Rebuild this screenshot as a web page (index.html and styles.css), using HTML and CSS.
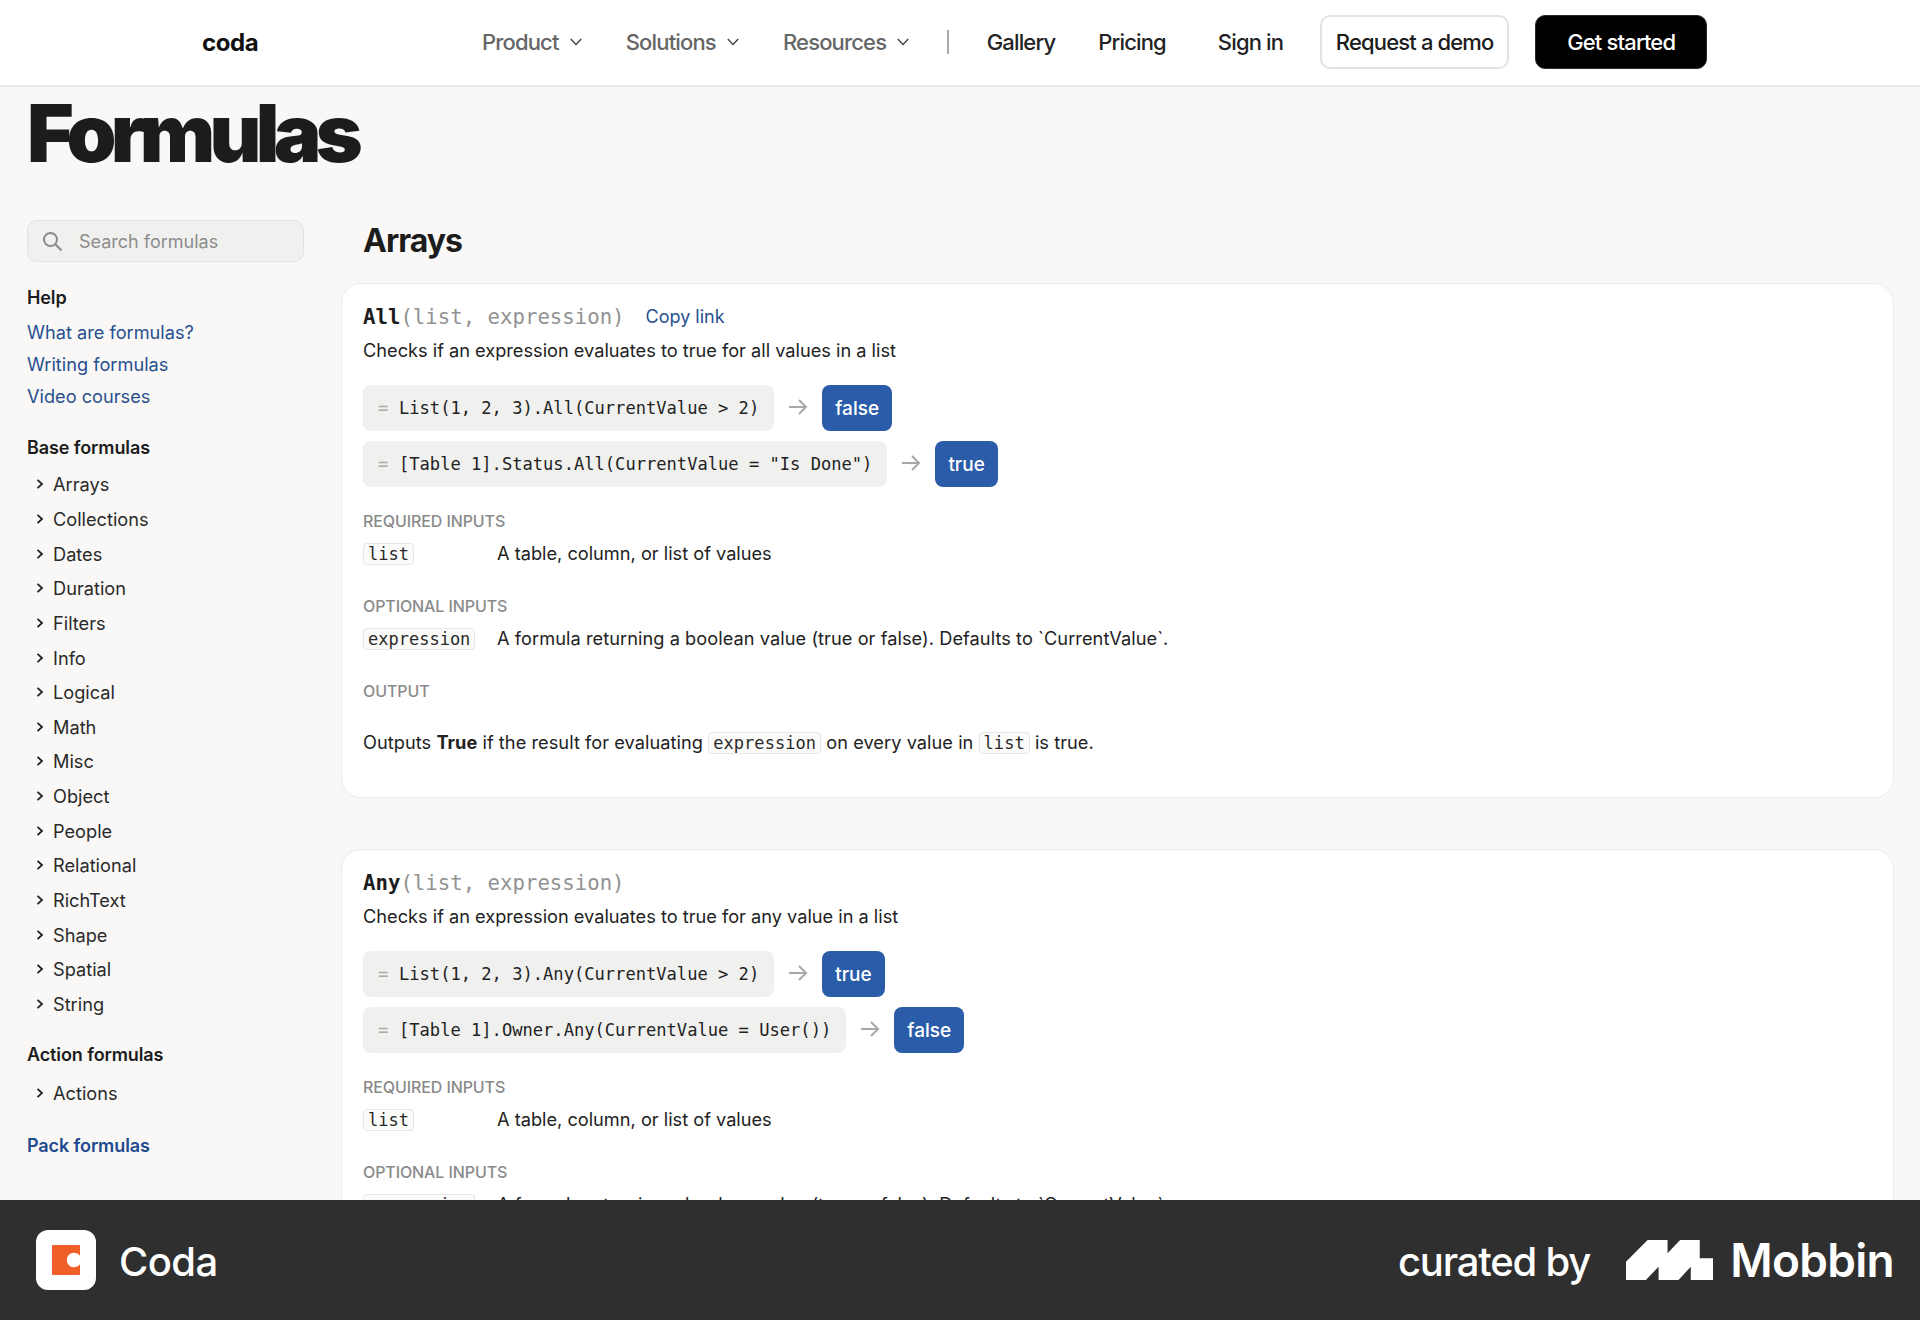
FILE: index.html
```html
<!DOCTYPE html>
<html lang="en">
<head>
<meta charset="utf-8">
<title>Formulas - Coda</title>
<link rel="stylesheet" href="styles.css">
</head>
<body>
<div class="page">
  <header class="topbar">
    <div class="logo">coda</div>
    <nav class="nav">
      <a class="nav-item muted">Product<svg class="chev" viewBox="0 0 14 14"><path d="M1.800 4l5.200 5.500L12.200 4"/></svg></a>
      <a class="nav-item muted">Solutions<svg class="chev" viewBox="0 0 14 14"><path d="M1.800 4l5.200 5.500L12.200 4"/></svg></a>
      <a class="nav-item muted last-menu">Resources<svg class="chev" viewBox="0 0 14 14"><path d="M1.800 4l5.200 5.500L12.200 4"/></svg></a>
      <span class="nav-divider"></span>
      <a class="nav-item gallery">Gallery</a>
      <a class="nav-item pricing">Pricing</a>
      <a class="nav-item signin">Sign in</a>
      <a class="btn btn-outline">Request a demo</a>
      <a class="btn btn-solid">Get started</a>
    </nav>
  </header>
  <main class="content">
    <h1 class="page-title">Formulas</h1>
    <div class="columns">
      <aside class="sidebar">
        <div class="search">
          <svg class="search-icon" viewBox="0 0 20 20"><circle cx="8.500" cy="8.500" r="6.500"/><path d="M13.300 13.300L19.500 19.500"/></svg>
          <span>Search formulas</span>
        </div>
        <h4 class="side-head help">Help</h4>
        <ul class="side-links">
          <li>What are formulas?</li>
          <li>Writing formulas</li>
          <li>Video courses</li>
        </ul>
        <h4 class="side-head base">Base formulas</h4>
        <ul class="side-tree">
          <li><svg viewBox="0 0 10 10"><path d="M1.500.8L6 5 1.500 9.200"/></svg>Arrays</li>
          <li><svg viewBox="0 0 10 10"><path d="M1.500.8L6 5 1.500 9.200"/></svg>Collections</li>
          <li><svg viewBox="0 0 10 10"><path d="M1.500.8L6 5 1.500 9.200"/></svg>Dates</li>
          <li><svg viewBox="0 0 10 10"><path d="M1.500.8L6 5 1.500 9.200"/></svg>Duration</li>
          <li><svg viewBox="0 0 10 10"><path d="M1.500.8L6 5 1.500 9.200"/></svg>Filters</li>
          <li><svg viewBox="0 0 10 10"><path d="M1.500.8L6 5 1.500 9.200"/></svg>Info</li>
          <li><svg viewBox="0 0 10 10"><path d="M1.500.8L6 5 1.500 9.200"/></svg>Logical</li>
          <li><svg viewBox="0 0 10 10"><path d="M1.500.8L6 5 1.500 9.200"/></svg>Math</li>
          <li><svg viewBox="0 0 10 10"><path d="M1.500.8L6 5 1.500 9.200"/></svg>Misc</li>
          <li><svg viewBox="0 0 10 10"><path d="M1.500.8L6 5 1.500 9.200"/></svg>Object</li>
          <li><svg viewBox="0 0 10 10"><path d="M1.500.8L6 5 1.500 9.200"/></svg>People</li>
          <li><svg viewBox="0 0 10 10"><path d="M1.500.8L6 5 1.500 9.200"/></svg>Relational</li>
          <li><svg viewBox="0 0 10 10"><path d="M1.500.8L6 5 1.500 9.200"/></svg>RichText</li>
          <li><svg viewBox="0 0 10 10"><path d="M1.500.8L6 5 1.500 9.200"/></svg>Shape</li>
          <li><svg viewBox="0 0 10 10"><path d="M1.500.8L6 5 1.500 9.200"/></svg>Spatial</li>
          <li><svg viewBox="0 0 10 10"><path d="M1.500.8L6 5 1.500 9.200"/></svg>String</li>
        </ul>
        <h4 class="side-head action">Action formulas</h4>
        <ul class="side-tree">
          <li><svg viewBox="0 0 10 10"><path d="M1.500.8L6 5 1.500 9.200"/></svg>Actions</li>
        </ul>
        <h4 class="side-head pack">Pack formulas</h4>
      </aside>
      <section class="main-col">
        <h2 class="section-title">Arrays</h2>
        <article class="card">
          <div class="sig"><code class="sig-code"><b>All</b>(list, expression)</code><a class="copy">Copy link</a></div>
          <p class="desc">Checks if an expression evaluates to true for all values in a list</p>
          <div class="example">
            <code class="formula"><i>=</i>List(1, 2, 3).All(CurrentValue &gt; 2)</code>
            <svg class="arrow" viewBox="0 0 20 20"><path d="M1 10h17M11 3l7 7-7 7"/></svg>
            <span class="result">false</span>
          </div>
          <div class="example">
            <code class="formula"><i>=</i>[Table 1].Status.All(CurrentValue = "Is Done")</code>
            <svg class="arrow" viewBox="0 0 20 20"><path d="M1 10h17M11 3l7 7-7 7"/></svg>
            <span class="result">true</span>
          </div>
          <h5 class="label first">REQUIRED INPUTS</h5>
          <div class="param"><div class="param-name"><code class="chip">list</code></div><span>A table, column, or list of values</span></div>
          <h5 class="label">OPTIONAL INPUTS</h5>
          <div class="param"><div class="param-name"><code class="chip">expression</code></div><span class="long">A formula returning a boolean value (true or false). Defaults to `CurrentValue`.</span></div>
          <h5 class="label">OUTPUT</h5>
          <p class="output">Outputs <b>True</b> if the result for evaluating <code class="chip">expression</code> on every value in <code class="chip">list</code> is true.</p>
        </article>
        <article class="card">
          <div class="sig"><code class="sig-code"><b>Any</b>(list, expression)</code></div>
          <p class="desc">Checks if an expression evaluates to true for any value in a list</p>
          <div class="example">
            <code class="formula"><i>=</i>List(1, 2, 3).Any(CurrentValue &gt; 2)</code>
            <svg class="arrow" viewBox="0 0 20 20"><path d="M1 10h17M11 3l7 7-7 7"/></svg>
            <span class="result">true</span>
          </div>
          <div class="example">
            <code class="formula"><i>=</i>[Table 1].Owner.Any(CurrentValue = User())</code>
            <svg class="arrow" viewBox="0 0 20 20"><path d="M1 10h17M11 3l7 7-7 7"/></svg>
            <span class="result">false</span>
          </div>
          <h5 class="label first">REQUIRED INPUTS</h5>
          <div class="param"><div class="param-name"><code class="chip">list</code></div><span>A table, column, or list of values</span></div>
          <h5 class="label">OPTIONAL INPUTS</h5>
          <div class="param"><div class="param-name"><code class="chip">expression</code></div><span class="long">A formula returning a boolean value (true or false). Defaults to `CurrentValue`.</span></div>
        </article>
      </section>
    </div>
  </main>
  <footer class="footer">
    <div class="foot-left">
      <div class="app-icon"><svg viewBox="0 0 28 30"><path class="coda-mark" d="M1 0h26a1 1 0 0 1 1 1v9.800A7.300 7.300 0 1 0 28 19.200V29a1 1 0 0 1-1 1H1a1 1 0 0 1-1-1V1a1 1 0 0 1 1-1z"/></svg></div>
      <span class="app-name">Coda</span>
    </div>
    <div class="foot-right">
      <span class="curated">curated by</span>
      <svg class="mobbin-mark" viewBox="0 0 87.300 40"><path d="M0 21.700L21.700 0h20v13.300L54.300 0H74v18.300h13.300V40H65V26.700L52.700 40h-20V26.700L20 40H0z"/></svg>
      <span class="mobbin">Mobbin</span>
    </div>
  </footer>
</div>
</body>
</html>
```
FILE: styles.css
```css
* { box-sizing: border-box; }
html, body { margin: 0; padding: 0; }
body { font-family: Inter, "Liberation Sans", sans-serif; color: #1c1c1c; background: #f9f8f6; }
h1, h2, h4, h5, p, ul { margin: 0; padding: 0; }
ul { list-style: none; }
code { font-family: "DejaVu Sans Mono", "Liberation Mono", monospace; }

.page { width: 1920px; height: 1320px; display: flex; flex-direction: column; overflow: hidden; }

.topbar { height: 87px; flex: none; background: #fff; border-bottom: 2px solid #e9e9e7; display: flex; align-items: center; padding: 0 0 1px 202px; }
.logo { font-size: 24px; font-weight: 700; letter-spacing: -0.4px; color: #111; width: 280px; }
.nav { display: flex; align-items: center; font-size: 22px; font-weight: 500; letter-spacing: -0.85px; }
.nav-item { display: flex; align-items: center; white-space: nowrap; color: #232323; }
.nav-item.muted { color: #666; margin-right: 43.200px; }
.nav-item.last-menu { margin-right: 36.600px; }
.chev { width: 14px; height: 14px; margin-left: 10px; fill: none; stroke: #444; stroke-width: 1.400; }
.nav-divider { width: 2px; height: 24px; background: #aaa; margin-right: 38px; }
.gallery { margin-right: 43px; }
.pricing { margin-right: 52px; }
.signin { margin-right: 37px; }
.btn { display: flex; align-items: center; justify-content: center; height: 54px; border-radius: 10px; white-space: nowrap; }
.btn-outline { width: 189px; border: 2px solid #e3e3e1; background: #fff; color: #1c1c1c; margin-right: 26px; }
.btn-solid { width: 172px; background: #000; border: 1px solid #2a2a2a; color: #fff; }

.content { flex: 1; min-height: 0; padding: 0 26px 0 27px; }
.page-title { font-size: 80px; font-weight: 900; letter-spacing: -5.700px; line-height: 92px; margin: 0 0 41px 0; color: #1c1c1c; }
.columns { display: flex; align-items: flex-start; }

.sidebar { width: 277px; flex: none; margin-right: 37px; }
.search { height: 42px; background: #f0f0ef; border: 1px solid #e3e3e1; border-radius: 10px; display: flex; align-items: center; padding-left: 14px; font-size: 18px; color: #8c8c8c; }
.search-icon { width: 20px; height: 20px; margin-right: 17px; fill: none; stroke: #8a8a8a; stroke-width: 2; }
.side-head { font-size: 18px; font-weight: 600; line-height: 24px; color: #1c1c1c; letter-spacing: -0.100px; }
.side-head.help { margin-top: 24px; }
.side-head.base { margin-top: 24px; }
.side-head.action { margin-top: 22px; }
.side-head.action + .side-tree { margin-top: 8px; }
.side-head.pack { margin-top: 24px; color: #1f4a8f; }
.side-links { margin-top: 6px; font-size: 18.200px; color: #27508f; }
.side-links li { height: 32px; line-height: 32px; }
.side-tree { margin-top: 7px; font-size: 18.200px; color: #2a2a2a; }
.side-tree li { height: 34.650px; line-height: 34px; display: flex; align-items: center; padding-left: 9px; }
.side-tree svg { width: 10px; height: 10px; margin-right: 7px; fill: none; stroke: #222; stroke-width: 1.800; }

.main-col { flex: 1; min-width: 0; margin-top: 1px; }
.section-title { font-size: 32px; font-weight: 700; letter-spacing: -1px; line-height: 40px; margin: 0 0 22px 22px; color: #1c1c1c; }
.card { background: #fff; border: 1px solid #ecebe9; border-radius: 20px; height: 515px; padding: 18px 21px 0; margin-bottom: 51px; }
.sig { display: flex; align-items: center; height: 30px; }
.sig-code { font-size: 20.700px; color: #929292; }
.sig-code b { color: #1c1c1c; }
.copy { font-size: 18px; color: #27508f; margin: 0 0 2px 21px; }
.desc { font-size: 18.200px; line-height: 24px; margin-top: 6px; color: #222; }
.example { display: flex; align-items: center; height: 46px; margin-bottom: 10px; }
.desc + .example { margin-top: 23px; }
.formula { height: 46px; background: #f0f0ef; border-radius: 8px; display: flex; align-items: center; padding: 0 15px; font-size: 17.100px; color: #222; white-space: pre; }
.formula i { font-style: normal; color: #aaa; width: 21px; flex: none; }
.arrow { width: 20px; height: 20px; margin: 0 14px 2px 14px; fill: none; stroke: #a8a8a8; stroke-width: 2; }
.result { height: 46px; display: flex; align-items: center; padding: 0 13px; background: #2a5caa; border-radius: 8px; color: #fff; font-size: 19px; font-weight: 500; }
.label { font-size: 16px; font-weight: 500; line-height: 22px; color: #8a8a8a; letter-spacing: -0.100px; margin-top: 27px; }
.label.first { margin-top: 23px; }
.param { display: flex; align-items: center; font-size: 18.200px; line-height: 26px; color: #222; margin-top: 6px; height: 30px; }
.param-name { width: 134px; flex: none; }
.long { letter-spacing: 0.060px; }
.chip { display: inline-block; font-size: 17px; line-height: 20px; padding: 0 4px; border: 1px solid #e6e6e4; border-radius: 4px; background: #fbfbfa; color: #2a2a2a; }
.output { font-size: 18.200px; line-height: 30px; color: #222; margin-top: 25px; letter-spacing: 0.050px; }
.output b { font-weight: 700; }

.footer { height: 120px; flex: none; background: #2f2f2f; display: flex; align-items: center; justify-content: space-between; padding: 0 26px 0 36px; color: #fff; }
.foot-left { display: flex; align-items: center; }
.app-icon { width: 60px; height: 60px; background: #fff; border-radius: 12px; display: flex; align-items: center; justify-content: center; }
.app-icon svg { width: 28px; height: 30px; }
.coda-mark { fill: #f05f2a; }
.app-name { font-size: 40px; font-weight: 500; margin: 2px 0 0 23px; letter-spacing: -0.600px; }
.foot-right { display: flex; align-items: center; }
.curated { font-size: 40px; font-weight: 500; letter-spacing: -1.200px; margin: 2px 36px 0 0; }
.mobbin-mark { width: 87px; height: 40px; fill: #fff; margin-right: 17px; }
.mobbin { font-size: 46px; font-weight: 600; letter-spacing: -0.700px; }
```
